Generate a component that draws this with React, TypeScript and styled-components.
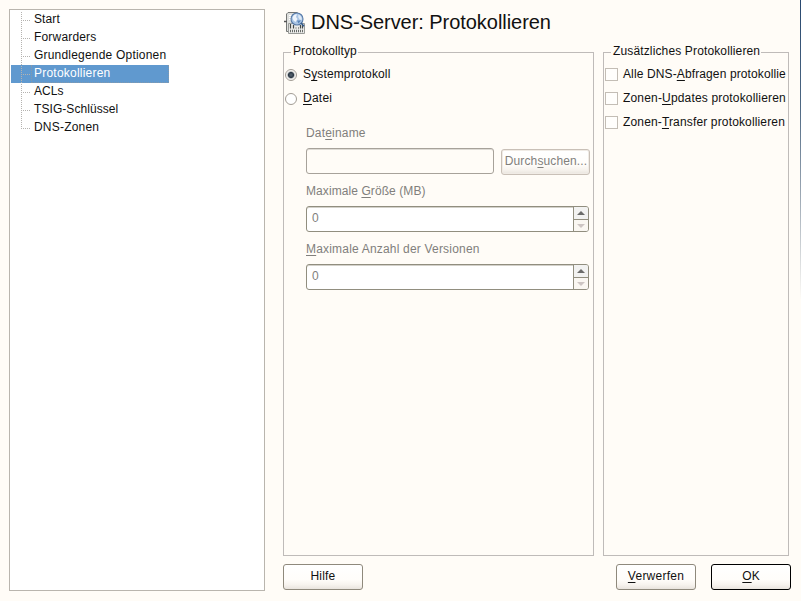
import React from "react";
import styled, { createGlobalStyle, css } from "styled-components";

const GlobalStyle = createGlobalStyle`
  *, *::before, *::after { box-sizing: border-box; }
  body {
    margin: 0;
    overflow: hidden;
    background: #fffcf7;
    color: #111;
    font: 12px/16px "Liberation Sans", Arial, sans-serif;
  }
`;

const Window = styled.div`
  display: flex;
  width: 801px;
  height: 601px;
  padding: 9px 0 0 9px;
`;

const Tree = styled.ul`
  flex: none;
  width: 256px;
  height: 582px;
  margin: 0 18px 0 0;
  padding: 1px;
  list-style: none;
  background: #fff;
  border: 1px solid #b9b5ae;
`;

const Branch = styled.svg`
  flex: none;
  display: block;
`;

const TreeRow = styled.li<{ $selected?: boolean }>`
  display: flex;
  width: 158px;
  height: 18px;
  ${(p) => p.$selected && css`
    background: #6099cf;
    color: #fff;
  `}
`;

const TreeLabel = styled.span<{ $selected?: boolean }>`
  flex: 1;
  height: 18px;
  padding-left: 2px;
  line-height: 16px;
  white-space: nowrap;
  border: 1px dotted transparent;
  border-width: 0 1px 1px;
  border-color: ${(p) => (p.$selected ? "#8599ab" : "transparent")};
`;

const Spaced = styled.span<{ $gap: number }>`
  letter-spacing: ${(p) => p.$gap}px;
  white-space: nowrap;
`;

const Mnemonic = styled.span`
  text-decoration: underline;
  text-decoration-thickness: 1px;
  text-underline-offset: 2px;
  text-decoration-skip-ink: none;
`;

const Main = styled.main`
  flex: none;
  display: flex;
  flex-direction: column;
  width: 508px;
`;

const Header = styled.header`
  display: flex;
  align-items: flex-start;
  height: 34px;
`;

const Title = styled.h1`
  margin: 0 0 0 4px;
  font-size: 20px;
  font-weight: 400;
  line-height: 26px;
  letter-spacing: -0.05px;
`;

const HeaderIcon = styled.svg`
  flex: none;
  margin-top: 2px;
`;

const Groups = styled.div`
  display: flex;
  gap: 9px;
`;

const Group = styled.fieldset<{ $width: number }>`
  flex: none;
  width: ${(p) => p.$width}px;
  min-width: 0;
  height: 513px;
  margin: 0;
  padding: 0 0 0 1px;
  border: 1px solid #bfbbb9;
  overflow: hidden;
`;

const Legend = styled.legend`
  height: 18px;
  margin-left: 6px;
  padding: 0 1px 0 2px;
  line-height: 16px;
`;

const Option = styled.div`
  display: flex;
  align-items: flex-start;
  height: 24px;
  line-height: 16px;
`;

const Options = styled.div`
  padding-top: 5px;
`;

const Radio = styled.span`
  flex: none;
  width: 12px;
  height: 12px;
  margin: 3px 6px 0 0;
  border: 1px solid #a29c94;
  border-radius: 50%;
  background: #fff;
`;

const RadioOn = styled(Radio)`
  background: radial-gradient(circle at 50% 50%, #5b6874 0, #2c3947 2.6px, #dcdcda 3.7px, #fff 5px);
`;

const Check = styled.span`
  flex: none;
  width: 13px;
  height: 13px;
  margin: 2px 5px 0 0;
  border: 1px solid #c3bdb5;
  background: #fffefc;
`;

const Fields = styled.div`
  width: 284px;
  margin: 11px 0 0 21px;
  color: #817f7c;
`;

const Field = styled.div`
  height: 58px;
`;

const FieldLabel = styled.div`
  height: 23px;
`;

const FileRow = styled.div`
  display: flex;
  align-items: flex-start;
  gap: 7px;
`;

const TextInput = styled.div`
  width: 188px;
  height: 26px;
  border: 1px solid #a7a29a;
  border-radius: 3px;
  box-shadow: inset 0 1px 0 #dedbd5;
`;

const Spin = styled.div`
  display: flex;
  width: 283px;
  height: 26px;
  border: 1px solid #918e7f;
  border-radius: 3px;
  background: #fff;
  box-shadow: inset 0 1px 0 #d3d1ca;
`;

const SpinValue = styled.span`
  flex: 1;
  padding: 3px 0 0 5px;
`;

const Stepper = styled.span`
  display: grid;
  grid-template-rows: 12px 12px;
  width: 15px;
  border-left: 1px solid #918e7f;
`;

const Step = styled.span<{ $down?: boolean }>`
  display: flex;
  align-items: center;
  justify-content: center;
  background: ${(p) => (p.$down ? "#faf7f2" : "#f2f2f1")};
  border-top: ${(p) => (p.$down ? "1px solid #918e7f" : "0")};
  border-radius: ${(p) => (p.$down ? "0 0 2px 0" : "0 2px 0 0")};
`;

const Button = styled.button<{ $kind?: "default" | "disabled" }>`
  flex: none;
  width: 80px;
  height: 26px;
  padding: 0 0 2px;
  font: inherit;
  color: #111;
  text-align: center;
  border: 1px solid #8f897c;
  border-radius: 3px;
  background: linear-gradient(#fff 0, #fffdfa 60%, #f7f3ee 82%, #e9e4de 100%);
  ${(p) => p.$kind === "default" && css`border-color: #000;`}
  ${(p) => p.$kind === "disabled" && css`
    width: 89px;
    margin-top: 1px;
    padding-left: 1px;
    color: #817f7c;
    border-color: #c9c0b7;
    box-shadow: inset 0 0 0 1px #f0ebe5;
  `}
`;

const Footer = styled.footer`
  display: flex;
  margin-top: 8px;
  gap: 15px;
`;

const Spacer = styled.span`
  flex: 1;
`;

const EdgeShade = styled.div`
  flex: none;
  align-self: flex-start;
  width: 1px;
  height: 300px;
  margin: -9px 0 0 9px;
  background: linear-gradient(#28486f 0, #4d6782 35%, #9ca8b4 65%, #fffcf7 100%);
`;

type Caption = { text: string; gap: number; at?: number };

/* Caption text whose character at index `at` is its keyboard mnemonic. */
function Text({ text, gap, at }: Caption) {
  if (at === undefined) return <Spaced $gap={gap}>{text}</Spaced>;
  return (
    <Spaced $gap={gap}>
      {text.slice(0, at)}
      <Mnemonic>{text[at]}</Mnemonic>
      {text.slice(at + 1)}
    </Spaced>
  );
}

const pages: Caption[] = [
  { text: "Start", gap: 0.1 },
  { text: "Forwarders", gap: 0.18 },
  { text: "Grundlegende Optionen", gap: 0.2 },
  { text: "Protokollieren", gap: 0.22 },
  { text: "ACLs", gap: 0.05 },
  { text: "TSIG-Schlüssel", gap: 0.07 },
  { text: "DNS-Zonen", gap: 0.2 },
];

const extras: Caption[] = [
  { text: "Alle DNS-Abfragen protokollie", gap: 0.12, at: 9 },
  { text: "Zonen-Updates protokollieren", gap: 0.17, at: 6 },
  { text: "Zonen-Transfer protokollieren", gap: 0.15, at: 6 },
];

const spins: Caption[] = [
  { text: "Maximale Größe (MB)", gap: 0.08, at: 9 },
  { text: "Maximale Anzahl der Versionen", gap: 0.19, at: 0 },
];

function TreeBranch({ last }: { last: boolean }) {
  return (
    <Branch width="20" height="18" viewBox="0 0 20 18" shapeRendering="crispEdges">
      <path d={last ? "M10.5 1V10" : "M10.5 1V18"} stroke="#b5b3b0" strokeDasharray="1 1" />
      <path d="M10 9.5H19" stroke="#b5b3b0" strokeDasharray="1 1" />
    </Branch>
  );
}

function ServerIcon() {
  return (
    <HeaderIcon width="24" height="24" viewBox="0 0 24 24">
      <path d="M5 1.5H14L17 4V20.5H3.5V3Z" fill="#dedfdd" stroke="#747674" />
      <path d="M1 10.5H4" stroke="#555" strokeWidth="1.5" />
      <path d="M6 4.5H10M6 6.5H9M6 8.5H9" stroke="#fff" />
      <path d="M5.5 12.5H21.5V22.5H5.5Z" fill="#ececea" stroke="#9a9c99" />
      <path d="M7.5 13V17.5M10.5 14V17.5M17.5 14V17.5M19.5 14V17.5M12.5 17H13.5M15 17H16" stroke="#444846" strokeWidth="1.2" />
      <path d="M7 20H20" stroke="#666a68" strokeWidth="2.4" strokeDasharray="1 1" />
      <circle cx="14" cy="8" r="6" fill="#a9c4e4" stroke="#587ba8" strokeWidth="1.1" />
      <path d="M9.5 7C10 4 12 2.8 14 3.2L13 6 14.5 8 12.5 11 10.5 9.5Z" fill="#eef4fb" />
      <path d="M15.5 3.5C18 4.5 19 6.5 18.7 9L16.5 8.5 15.2 6Z" fill="#dfeaf6" />
      <path d="M14 9.5H18L15.5 12.5Z" fill="#5c86b9" />
      <path d="M18 12L21 15.2" stroke="#345b8c" strokeWidth="1.6" />
    </HeaderIcon>
  );
}

function Arrow({ down }: { down?: boolean }) {
  return (
    <svg width="8" height="4" viewBox="0 0 8 4">
      <path d={down ? "M0 0H8L4 4Z" : "M0 4H8L4 0Z"} fill={down ? "#cdc5c3" : "#6b6b6a"} />
    </svg>
  );
}

export default function App() {
  return (
    <>
      <GlobalStyle />
      <Window>
        <Tree>
          {pages.map((p, i) => (
            <TreeRow key={p.text} $selected={i === 3}>
              <TreeBranch last={i === pages.length - 1} />
              <TreeLabel $selected={i === 3}><Text {...p} /></TreeLabel>
            </TreeRow>
          ))}
        </Tree>
        <Main>
          <Header>
            <ServerIcon />
            <Title>DNS-Server: Protokollieren</Title>
          </Header>
          <Groups>
            <Group $width={311}>
              <Legend><Text text="Protokolltyp" gap={0.1} /></Legend>
              <Options>
                <Option><RadioOn /><Text text="Systemprotokoll" gap={0.14} at={1} /></Option>
                <Option><Radio /><Text text="Datei" gap={0.25} at={0} /></Option>
              </Options>
              <Fields>
                <Field>
                  <FieldLabel><Text text="Dateiname" gap={0.18} at={3} /></FieldLabel>
                  <FileRow>
                    <TextInput />
                    <Button $kind="disabled"><Text text="Durchsuchen..." gap={0.12} at={5} /></Button>
                  </FileRow>
                </Field>
                {spins.map((s) => (
                  <Field key={s.text}>
                    <FieldLabel><Text {...s} /></FieldLabel>
                    <Spin>
                      <SpinValue>0</SpinValue>
                      <Stepper>
                        <Step><Arrow /></Step>
                        <Step $down><Arrow down /></Step>
                      </Stepper>
                    </Spin>
                  </Field>
                ))}
              </Fields>
            </Group>
            <Group $width={186}>
              <Legend><Text text="Zusätzliches Protokollieren" gap={0.14} /></Legend>
              <Options>
                {extras.map((e) => (
                  <Option key={e.text}><Check /><Text {...e} /></Option>
                ))}
              </Options>
            </Group>
          </Groups>
          <Footer>
            <Button><Text text="Hilfe" gap={0.2} /></Button>
            <Spacer />
            <Button><Text text="Verwerfen" gap={0.25} at={0} /></Button>
            <Button $kind="default"><Text text="OK" gap={0} at={0} /></Button>
          </Footer>
        </Main>
        <EdgeShade />
      </Window>
    </>
  );
}
